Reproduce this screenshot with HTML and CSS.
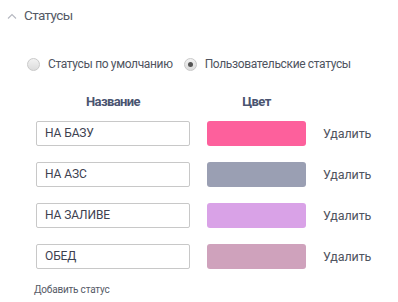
FILE: index.html
```html
<!DOCTYPE html>
<html lang="ru">
<head>
<meta charset="utf-8">
<link rel="stylesheet" href="styles.css">
</head>
<body>
<div class="panel">
  <div class="section-head">
    <svg class="chevron" width="10" height="6" viewBox="0 0 10 6"><path d="M1 5.5 L5 1.5 L9 5.5" fill="none" stroke="#b5b8c0" stroke-width="1.1"/></svg>
    <span class="section-title">Статусы</span>
  </div>
  <div class="radios">
    <label class="radio"><span class="dot"></span>Статусы по умолчанию</label>
    <label class="radio"><span class="dot checked"></span>Пользовательские статусы</label>
  </div>
  <div class="table">
    <div class="th">Название</div>
    <div class="th">Цвет</div>
    <div></div>
    <div class="field">НА БАЗУ</div>
    <div class="swatch" style="background:#fd609c"></div>
    <div class="del">Удалить</div>
    <div class="field">НА АЗС</div>
    <div class="swatch" style="background:#9a9fb3"></div>
    <div class="del">Удалить</div>
    <div class="field">НА ЗАЛИВЕ</div>
    <div class="swatch" style="background:#d9a2e7"></div>
    <div class="del">Удалить</div>
    <div class="field">ОБЕД</div>
    <div class="swatch" style="background:#cfa2bc"></div>
    <div class="del">Удалить</div>
  </div>
  <div class="add">Добавить статус</div>
</div>
</body>
</html>
```
FILE: styles.css
```css
html, body {
  margin: 0;
  padding: 0;
  background: #fff;
}
body {
  font-family: Roboto, "Noto Sans", sans-serif;
  color: #4f5563;
  width: 398px;
  height: 302px;
  overflow: hidden;
}
.panel {
  padding: 6px 0 0 0;
}
.section-head {
  display: flex;
  align-items: center;
  gap: 7px;
  padding-left: 7px;
  height: 18px;
}
.chevron {
  display: block;
  margin-top: 1px;
}
.section-title {
  font-size: 13.5px;
  color: #555a66;
  letter-spacing: -0.6px;
}
.radios {
  display: flex;
  gap: 11px;
  padding: 33px 0 0 27px;
}
.radio {
  display: flex;
  align-items: center;
  gap: 8px;
  font-size: 12px;
  color: #4f5460;
  height: 14px;
  letter-spacing: -0.35px;
}
.dot {
  width: 11px;
  height: 11px;
  border-radius: 50%;
  border: 1px solid #c9c9c9;
  background: linear-gradient(#f2f2f2, #dcdcdc);
  position: relative;
  box-sizing: content-box;
}
.dot.checked::after {
  content: "";
  position: absolute;
  left: 3px;
  top: 3px;
  width: 5px;
  height: 5px;
  border-radius: 50%;
  background: #555;
}
.table {
  display: grid;
  grid-template-columns: 154px 99px auto;
  column-gap: 17px;
  row-gap: 16px;
  padding: 26px 0 0 36px;
  align-items: center;
}
.th {
  font-size: 13px;
  font-weight: 700;
  color: #4a5470;
  text-align: center;
  letter-spacing: -0.6px;
  height: 10px;
  line-height: 10px;
  margin-bottom: -2px;
}
.field {
  box-sizing: border-box;
  height: 25px;
  border: 1px solid #c8c8c8;
  border-radius: 2px;
  font-size: 12px;
  line-height: 23px;
  padding-left: 8px;
  color: #3d4150;
  letter-spacing: -0.1px;
}
.swatch {
  height: 25px;
  border-radius: 3px;
}
.del {
  font-size: 12.5px;
  color: #4f5460;
  letter-spacing: -0.1px;
}
.add {
  font-size: 10px;
  color: #555a66;
  padding: 15px 0 0 34px;
  letter-spacing: -0.2px;
}
```
